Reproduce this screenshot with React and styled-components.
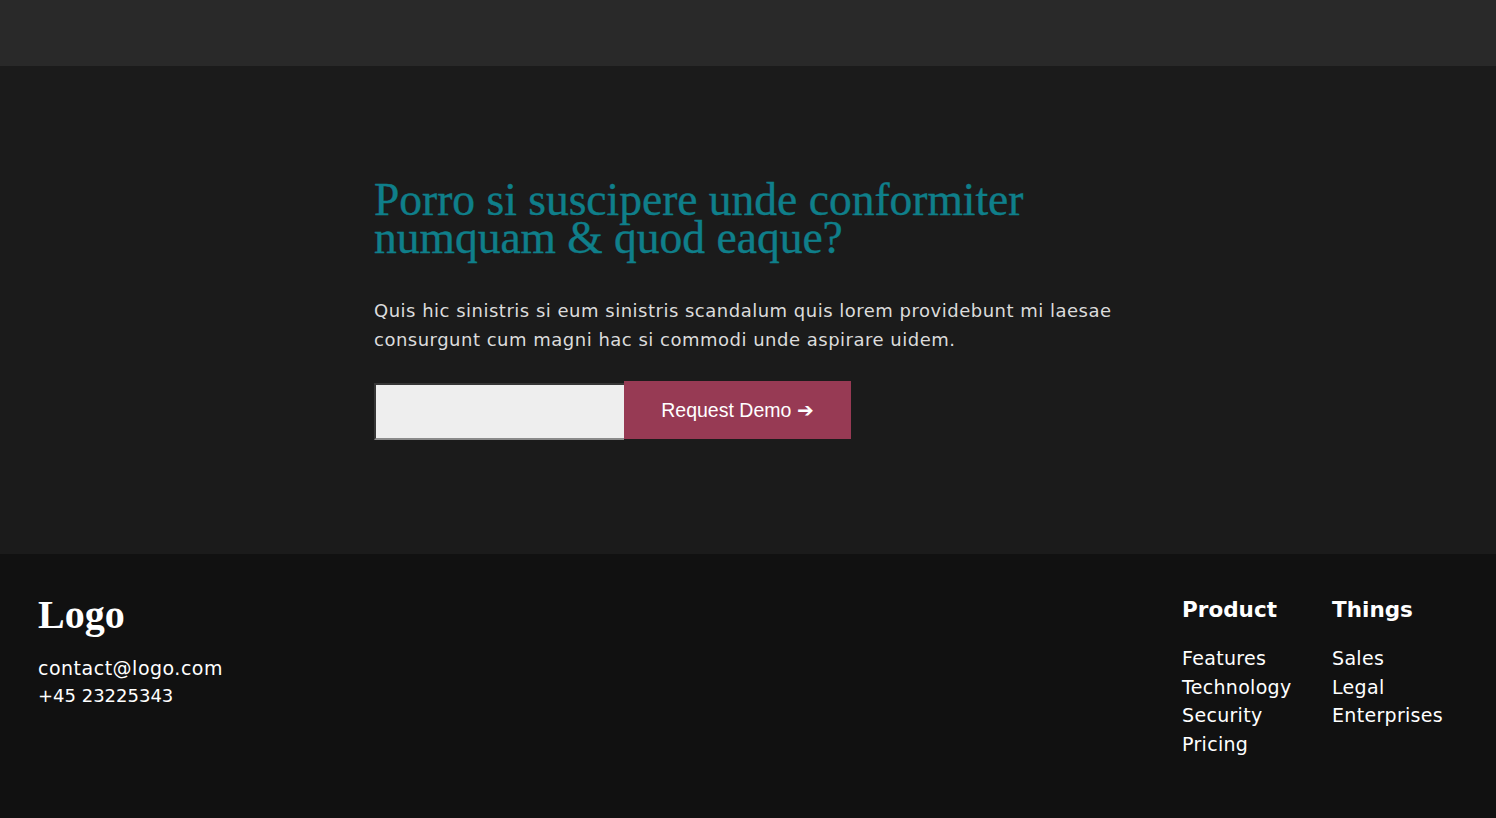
import styled, { createGlobalStyle } from "styled-components";

const GlobalStyle = createGlobalStyle`
  body {
    margin: 0;
    background: #111111;
    font-family: "DejaVu Sans", "Liberation Sans", sans-serif;
  }
`;

const Page = styled.div`
  width: 100%;
  min-height: 818px;
  display: flex;
  flex-direction: column;
`;

const TopBar = styled.header`
  height: 66px;
  background: #292929;
`;

const Hero = styled.section`
  height: 488px;
  background: #1b1b1b;
  box-sizing: border-box;
  padding: 115px 0 0 374px;
`;

const Heading = styled.h1`
  margin: 0;
  width: 760px;
  font-family: "Liberation Serif", serif;
  font-weight: 400;
  font-size: 45.5px;
  line-height: 38px;
  color: #0f7f8a;
  -webkit-text-stroke: 0.4px #0f7f8a;
`;

const Lead = styled.p`
  margin: 39px 0 0;
  width: 760px;
  font-size: 18px;
  letter-spacing: 0.5px;
  line-height: 29px;
  color: #dcdcdc;
`;

const DemoForm = styled.form`
  display: flex;
  align-items: flex-start;
  margin-top: 27px;
`;

const EmailInput = styled.input`
  width: 250px;
  height: 57px;
  margin-top: 2px;
  box-sizing: border-box;
  background: #eeeeee;
  border: 2px inset #8a8a8a;
  border-right: none;
  outline: none;
`;

const DemoButton = styled.button`
  width: 227px;
  height: 58px;
  border: none;
  background: #973a54;
  color: #ffffff;
  font-family: "Liberation Sans", Arial, sans-serif;
  font-size: 19.5px;
  cursor: pointer;
`;

const Footer = styled.footer`
  flex: 1;
  display: flex;
  justify-content: space-between;
  padding: 38px 53px 40px 38px;
  background: #111111;
  color: #ffffff;
`;

const Brand = styled.div`
  display: flex;
  flex-direction: column;
`;

const Logo = styled.div`
  font-family: "Liberation Serif", serif;
  font-weight: 700;
  font-size: 40px;
  line-height: 46px;
  margin-bottom: 16px;
`;

const ContactLine = styled.div`
  font-size: ${(p) => p.$size}px;
  letter-spacing: ${(p) => p.$spacing}px;
  line-height: 28px;
`;

const Columns = styled.nav`
  display: flex;
  gap: 38px;
`;

const Column = styled.div`
  display: flex;
  flex-direction: column;
  min-width: ${(p) => p.$width}px;
`;

const ColumnTitle = styled.div`
  font-weight: 700;
  font-size: 21.5px;
  line-height: 30px;
  margin: 3px 0 19px;
`;

const ColumnLink = styled.a`
  font-size: 19px;
  letter-spacing: 0.3px;
  line-height: 28.7px;
  color: #ffffff;
  text-decoration: none;
`;

const columns = [
  { title: "Product", width: 112, links: ["Features", "Technology", "Security", "Pricing"] },
  { title: "Things", width: 105, links: ["Sales", "Legal", "Enterprises"] },
];

export default function App() {
  return (
    <Page>
      <GlobalStyle />
      <TopBar />
      <Hero>
        <Heading>
          Porro si suscipere unde conformiter numquam &amp; quod eaque?
        </Heading>
        <Lead>
          Quis hic sinistris si eum sinistris scandalum quis lorem providebunt
          mi laesae consurgunt cum magni hac si commodi unde aspirare uidem.
        </Lead>
        <DemoForm onSubmit={(e) => e.preventDefault()}>
          <EmailInput type="email" />
          <DemoButton type="submit">Request Demo ➔</DemoButton>
        </DemoForm>
      </Hero>
      <Footer>
        <Brand>
          <Logo>Logo</Logo>
          <ContactLine $size={19} $spacing={0.5}>contact@logo.com</ContactLine>
          <ContactLine $size={18} $spacing={0}>+45 23225343</ContactLine>
        </Brand>
        <Columns>
          {columns.map((col) => (
            <Column key={col.title} $width={col.width}>
              <ColumnTitle>{col.title}</ColumnTitle>
              {col.links.map((l) => (
                <ColumnLink key={l} href="#">
                  {l}
                </ColumnLink>
              ))}
            </Column>
          ))}
        </Columns>
      </Footer>
    </Page>
  );
}
